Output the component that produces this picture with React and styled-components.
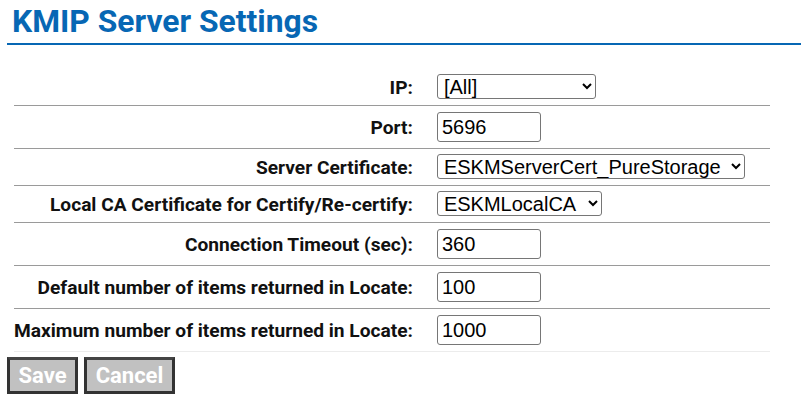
import React from "react";
import styled, { createGlobalStyle } from "styled-components";

const GlobalStyle = createGlobalStyle`
  html, body {
    margin: 0;
    padding: 0;
    background: #fff;
  }
  body {
    font-family: Roboto, "Liberation Sans", Arial, sans-serif;
    color: #000;
  }
`;

const Page = styled.div`
  padding: 0 0 0 7px;
  width: 794px;
`;

const Title = styled.h1`
  margin: 0;
  padding: 3px 0 4px 5px;
  font-size: 31.8px;
  font-weight: 700;
  line-height: 36px;
  color: #0767b4;
  border-bottom: 2px solid #0767b4;
`;

const Form = styled.form`
  padding: 24px 31px 0 7px;
`;

const Table = styled.table`
  width: 756px;
  border-collapse: collapse;

  tr {
    border-bottom: 1px solid #9a9a9a;
  }
  tr:last-child {
    border-bottom: 1px solid #ececec;
  }
`;

const Label = styled.th`
  text-align: right;
  font-size: 19.15px;
  font-weight: 700;
  white-space: nowrap;
  padding: 5px 24px 5px 0;
  width: 1px;
  color: #111;
`;

const Cell = styled.td`
  padding: ${(p) => (p.$tall ? "6px" : "5px")} 0 6px 0;
`;

const Select = styled.select`
  font-family: "Liberation Sans", Arial, sans-serif;
  font-size: 20px;
  height: 25px;
  padding: 0 0 0 2px;
  border: 1px solid #767676;
  border-radius: 3px;
  background: #fff;
  color: #000;
  width: ${(p) => p.$w}px;
`;

const Input = styled.input`
  font-family: "Liberation Sans", Arial, sans-serif;
  font-size: 20px;
  height: 30px;
  width: 104px;
  box-sizing: border-box;
  padding: 2px 4px;
  border: 1px solid #767676;
  border-radius: 3px;
  color: #000;
`;

const Buttons = styled.div`
  display: flex;
  gap: 6px;
  padding-top: 5px;
`;

const Button = styled.button`
  font-family: Roboto, "Liberation Sans", Arial, sans-serif;
  font-size: 22px;
  font-weight: 700;
  color: #fff;
  background: #c1c1c1;
  border: 3px solid #333;
  border-top-color: #444;
  height: 37px;
  width: ${(p) => p.$w}px;
  padding: 0;
  cursor: default;
`;

const rows = [
  { label: "IP:", type: "select", value: "[All]", w: 159 },
  { label: "Port:", type: "input", value: "5696" },
  { label: "Server Certificate:", type: "select", value: "ESKMServerCert_PureStorage", w: 308 },
  { label: "Local CA Certificate for Certify/Re-certify:", type: "select", value: "ESKMLocalCA", w: 165 },
  { label: "Connection Timeout (sec):", type: "input", value: "360" },
  { label: "Default number of items returned in Locate:", type: "input", value: "100" },
  { label: "Maximum number of items returned in Locate:", type: "input", value: "1000" },
];

export default function App() {
  return (
    <>
      <GlobalStyle />
      <Page>
        <Title>KMIP Server Settings</Title>
        <Form onSubmit={(e) => e.preventDefault()}>
          <Table>
            <tbody>
              {rows.map((r) => (
                <tr key={r.label}>
                  <Label>{r.label}</Label>
                  <Cell $tall={r.type === "input"}>
                    {r.type === "select" ? (
                      <Select $w={r.w} defaultValue={r.value}>
                        <option>{r.value}</option>
                      </Select>
                    ) : (
                      <Input defaultValue={r.value} />
                    )}
                  </Cell>
                </tr>
              ))}
            </tbody>
          </Table>
        </Form>
        <Buttons>
          <Button $w={71}>Save</Button>
          <Button $w={91}>Cancel</Button>
        </Buttons>
      </Page>
    </>
  );
}
